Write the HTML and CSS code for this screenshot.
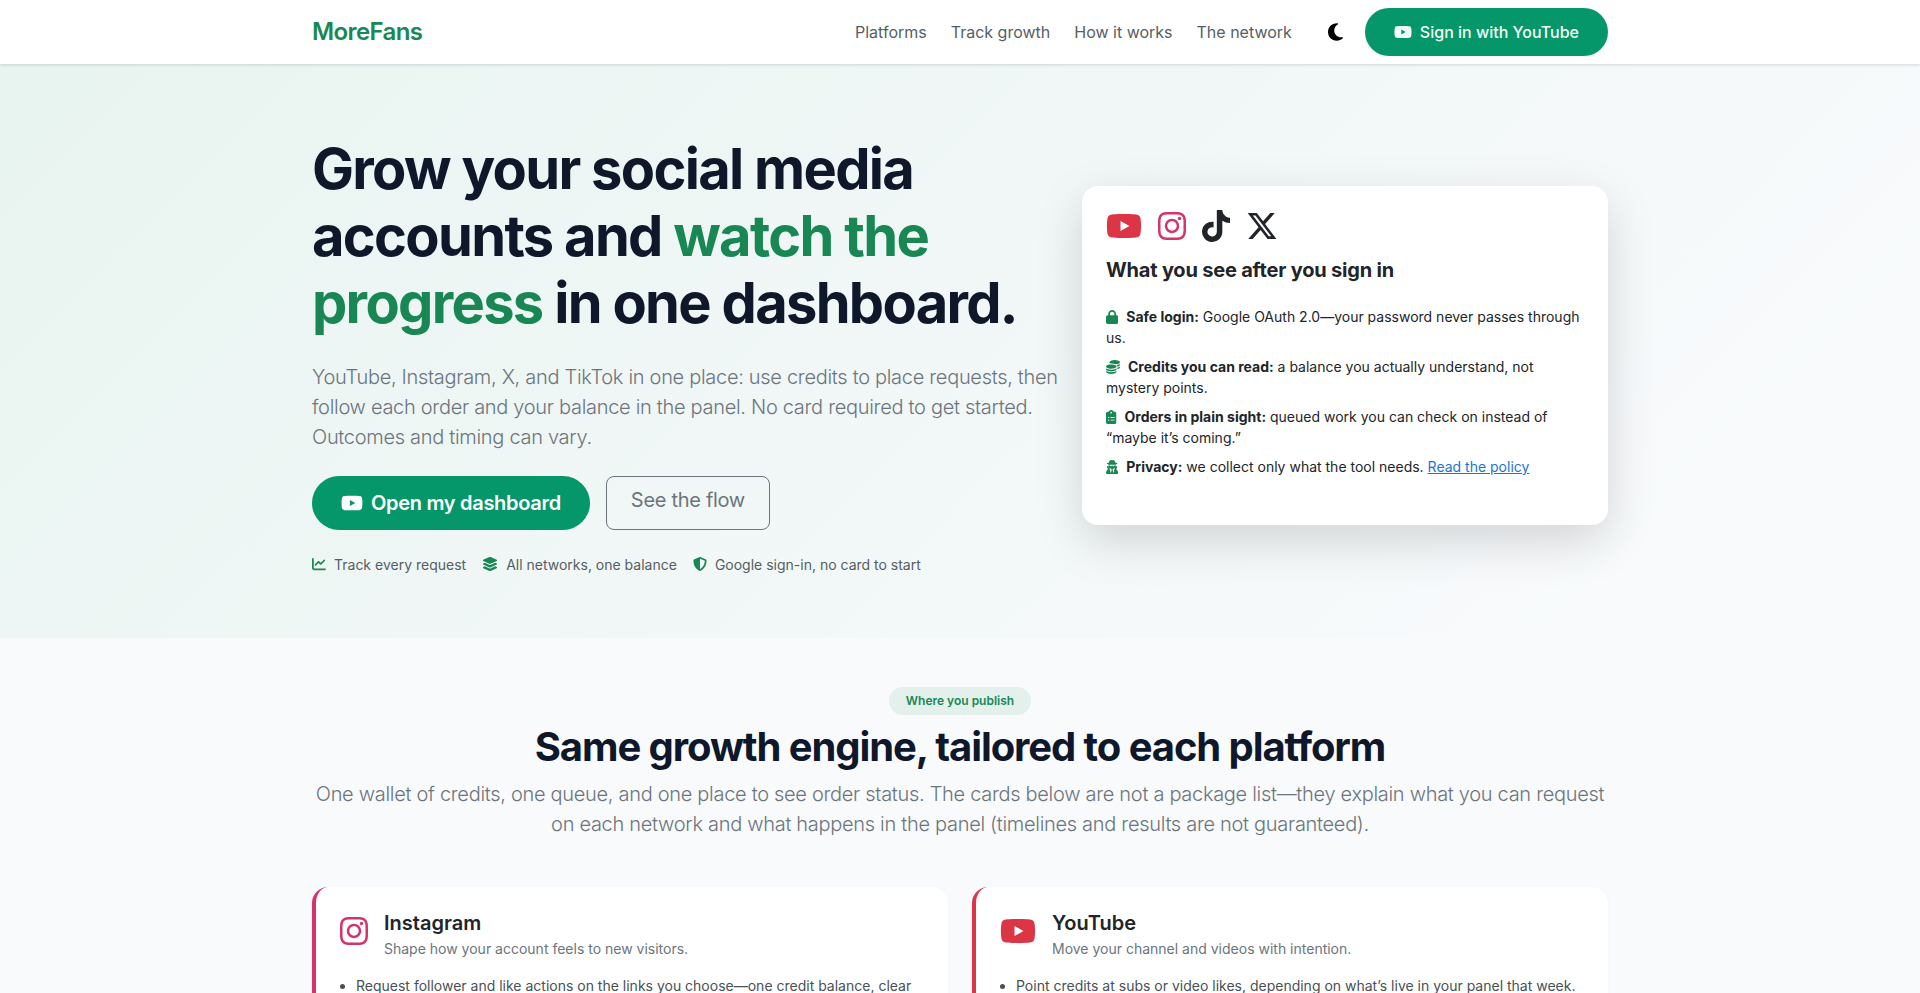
FILE: index.html
```html
<!DOCTYPE html>
<html lang="en">
<head>
    <meta charset="UTF-8">
    <meta name="viewport" content="width=device-width, initial-scale=1.0">
    <title>MoreFans</title>
    <link rel="stylesheet" href="styles.css">
</head>
<body>
    <svg class="sprite" xmlns="http://www.w3.org/2000/svg">
        <symbol id="i-youtube" viewBox="0 0 576 512"><path d="M549.655 124.083c-6.281-23.65-24.787-42.276-48.284-48.597C458.781 64 288 64 288 64S117.22 64 74.629 75.486c-23.497 6.322-42.003 24.947-48.284 48.597-11.412 42.867-11.412 132.305-11.412 132.305s0 89.438 11.412 132.305c6.281 23.65 24.787 41.5 48.284 47.821C117.22 448 288 448 288 448s170.78 0 213.371-11.486c23.497-6.321 42.003-24.171 48.284-47.821 11.412-42.867 11.412-132.305 11.412-132.305s0-89.438-11.412-132.305zm-317.51 213.508V175.185l142.739 81.205-142.739 81.201z"/></symbol>
        <symbol id="i-instagram" viewBox="0 0 448 512"><path d="M224.1 141c-63.6 0-114.9 51.3-114.9 114.9s51.3 114.9 114.9 114.9S339 319.5 339 255.9 287.7 141 224.1 141zm0 189.6c-41.1 0-74.7-33.5-74.7-74.7s33.5-74.7 74.7-74.7 74.7 33.5 74.7 74.7-33.6 74.7-74.7 74.7zm146.4-194.3c0 14.9-12 26.8-26.8 26.8-14.9 0-26.8-12-26.8-26.8s12-26.8 26.8-26.8 26.8 12 26.8 26.8zm76.1 27.2c-1.7-35.9-9.9-67.7-36.2-93.9-26.2-26.2-58-34.4-93.9-36.2-37-2.1-147.9-2.1-184.9 0-35.8 1.7-67.6 9.9-93.9 36.1s-34.4 58-36.2 93.9c-2.1 37-2.1 147.9 0 184.9 1.7 35.9 9.9 67.7 36.2 93.9s58 34.4 93.9 36.2c37 2.1 147.9 2.1 184.9 0 35.9-1.7 67.7-9.9 93.9-36.2 26.2-26.2 34.4-58 36.2-93.9 2.1-37 2.1-147.8 0-184.8zM398.8 388c-7.8 19.6-22.9 34.7-42.6 42.6-29.5 11.7-99.5 9-132.1 9s-102.7 2.6-132.1-9c-19.6-7.8-34.7-22.9-42.6-42.6-11.7-29.5-9-99.5-9-132.1s-2.6-102.7 9-132.1c7.8-19.6 22.9-34.7 42.6-42.6 29.5-11.7 99.5-9 132.1-9s102.7-2.6 132.1 9c19.6 7.8 34.7 22.9 42.6 42.6 11.7 29.5 9 99.5 9 132.1s2.7 102.7-9 132.1z"/></symbol>
        <symbol id="i-tiktok" viewBox="0 0 448 512"><path d="M448,209.91a210.06,210.06,0,0,1-122.77-39.25V349.38A162.55,162.55,0,1,1,185,188.31V278.2a74.62,74.62,0,1,0,52.23,71.18V0l88,0a121.18,121.18,0,0,0,1.86,22.17h0A122.18,122.18,0,0,0,381,102.39a121.43,121.43,0,0,0,67,20.14Z"/></symbol>
        <symbol id="i-x" viewBox="0 0 512 512"><path d="M389.2 48h70.6L305.6 224.2 487 464H345L233.7 318.6 106.5 464H35.8L200.7 275.5 26.8 48H172.4L272.9 180.9 389.2 48zM364.4 421.8h39.1L151.1 88h-42L364.4 421.8z"/></symbol>
        <symbol id="i-moon" viewBox="0 0 384 512"><path d="M223.5 32C100 32 0 132.3 0 256S100 480 223.5 480c60.6 0 115.5-24.2 155.8-63.4c5-4.9 6.3-12.5 3.1-18.7s-10.1-9.7-17-8.5c-9.8 1.7-19.8 2.6-30.1 2.6c-96.9 0-175.5-78.8-175.5-176c0-65.8 36-123.1 89.3-153.3c6.1-3.5 9.2-10.5 7.7-17.3s-7.3-11.9-14.3-12.5c-6.3-.5-12.6-.8-19-.8z"/></symbol>
        <symbol id="i-lock" viewBox="0 0 448 512"><path d="M144 144v48H304V144c0-44.2-35.8-80-80-80s-80 35.8-80 80zM80 192V144C80 64.5 144.5 0 224 0s144 64.5 144 144v48h16c35.3 0 64 28.7 64 64V448c0 35.3-28.7 64-64 64H64c-35.3 0-64-28.7-64-64V256c0-35.3 28.7-64 64-64H80z"/></symbol>
        <symbol id="i-coins" viewBox="0 0 512 512"><path d="M512 80c0 18-14.3 34.6-38.4 48c-29.1 16.1-72.5 27.5-122.3 30.9c-3.7-1.8-7.4-3.5-11.3-5C300.6 137.4 248.2 128 192 128c-8.3 0-16.4 .2-24.5 .6l-1.1-.6C142.3 114.6 128 98 128 80c0-44.2 86-80 192-80S512 35.8 512 80zM160.7 161.1c10.2-.7 20.7-1.1 31.3-1.1c62.2 0 117.4 12.3 152.5 31.4C369.3 204.9 384 221.7 384 240c0 4-.7 7.9-2.1 11.7c-4.6 13.2-17 25.3-35 35.5c0 0 0 0 0 0c-.1 .1-.3 .1-.4 .2l0 0 0 0c-.3 .2-.6 .3-.9 .5c-35 19.4-90.8 32-153.6 32c-59.6 0-112.9-11.3-148.2-29.1c-1.9-.9-3.7-1.9-5.5-2.9C14.3 274.6 0 258 0 240c0-34.8 53.4-64.5 128-75.4c10.5-1.5 21.4-2.7 32.7-3.5zM416 240c0-21.9-10.6-39.9-24.1-53.4c28.3-4.4 54.2-11.4 76.2-20.5c16.3-6.8 31.5-15.2 43.9-25.5V176c0 19.3-16.5 37.1-43.8 50.9c-14.6 7.4-32.4 13.7-52.4 18.5c.1-1.8 .2-3.5 .2-5.3zm-32 96c0 18-14.3 34.6-38.4 48c-1.8 1-3.6 1.9-5.5 2.9C304.9 404.7 251.6 416 192 416c-62.8 0-118.6-12.6-153.6-32C14.3 370.6 0 354 0 336V300.6c12.5 10.3 27.6 18.7 43.9 25.5C83.4 342.6 135.8 352 192 352s108.6-9.4 148.1-25.9c7.8-3.2 15.3-6.9 22.4-10.9c6.1-3.4 11.8-7.2 17.2-11.2c1.5-1.1 2.9-2.3 4.3-3.4V304v5.7V336zm32 0V304 278.1c19-4.2 36.5-9.5 52.1-16c16.3-6.8 31.5-15.2 43.9-25.5V272c0 10.5-5 21-14.9 30.9c-16.3 16.3-45 29.7-81.3 38.4c.1-1.7 .2-3.5 .2-5.3zM192 448c56.2 0 108.6-9.4 148.1-25.9c16.3-6.8 31.5-15.2 43.9-25.5V432c0 44.2-86 80-192 80S0 476.2 0 432V396.6c12.5 10.3 27.6 18.7 43.9 25.5C83.4 438.6 135.8 448 192 448z"/></symbol>
        <symbol id="i-clipboard" viewBox="0 0 384 512"><path d="M192 0c-41.8 0-77.4 26.7-90.5 64H64C28.7 64 0 92.7 0 128V448c0 35.3 28.7 64 64 64H320c35.3 0 64-28.7 64-64V128c0-35.3-28.7-64-64-64H282.5C269.4 26.7 233.8 0 192 0zm0 64a32 32 0 1 1 0 64 32 32 0 1 1 0-64zM72 272a24 24 0 1 1 48 0 24 24 0 1 1 -48 0zm104-16H304c8.8 0 16 7.2 16 16s-7.2 16-16 16H176c-8.8 0-16-7.2-16-16s7.2-16 16-16zM72 368a24 24 0 1 1 48 0 24 24 0 1 1 -48 0zm88 0c0-8.8 7.2-16 16-16H304c8.8 0 16 7.2 16 16s-7.2 16-16 16H176c-8.8 0-16-7.2-16-16z"/></symbol>
        <symbol id="i-secret" viewBox="0 0 448 512"><path d="M224 16c-6.7 0-10.8-2.8-15.5-6.1C201.9 5.4 194 0 176 0c-30.5 0-52 43.7-66 89.4C62.7 98.1 32 112.2 32 128c0 14.3 25 27.1 64.6 35.9c-.4 4-.6 8-.6 12.1c0 17 3.3 33.2 9.3 48H45.4C38 224 32 230 32 237.4c0 1.7 .3 3.4 1 5l38.8 96.9C28.2 371.8 0 423.8 0 482.3C0 498.7 13.3 512 29.7 512H418.3c16.4 0 29.7-13.3 29.7-29.7c0-58.5-28.2-110.4-71.7-143L415 242.4c.6-1.6 1-3.3 1-5c0-7.4-6-13.4-13.4-13.4H342.7c6-14.8 9.3-31 9.3-48c0-4.1-.2-8.1-.6-12.1C391 155.1 416 142.3 416 128c0-15.8-30.7-29.9-78-38.6C324 43.7 302.5 0 272 0c-18 0-25.9 5.4-32.5 9.9c-4.8 3.3-8.8 6.1-15.5 6.1zm56 208H267.6c-16.5 0-31.1-10.6-36.3-26.2c-2.3-7-12.2-7-14.5 0c-5.2 15.6-19.9 26.2-36.3 26.2H168c-22.1 0-40-17.9-40-40V169.6c28.2 4.1 61 6.4 96 6.4s67.8-2.3 96-6.4V184c0 22.1-17.9 40-40 40zm-88 96l16 32L176 480 128 288l64 32zm128-32L272 480 240 352l16-32 64-32z"/></symbol>
        <symbol id="i-chart" viewBox="0 0 512 512"><path d="M64 64c0-17.7-14.3-32-32-32S0 46.3 0 64V400c0 44.2 35.8 80 80 80H480c17.7 0 32-14.3 32-32s-14.3-32-32-32H80c-8.8 0-16-7.2-16-16V64zm406.6 86.6c12.5-12.5 12.5-32.8 0-45.3s-32.8-12.5-45.3 0L320 210.7l-57.4-57.4c-12.5-12.5-32.8-12.5-45.3 0l-112 112c-12.5 12.5-12.5 32.8 0 45.3s32.8 12.5 45.3 0L240 221.3l57.4 57.4c12.5 12.5 32.8 12.5 45.3 0l128-128z"/></symbol>
        <symbol id="i-layers" viewBox="0 0 576 512"><path d="M264.5 5.2c14.9-6.9 32.1-6.9 47 0l218.6 101c8.5 3.9 13.9 12.4 13.9 21.8s-5.4 17.9-13.9 21.8l-218.6 101c-14.9 6.9-32.1 6.9-47 0L45.9 149.8C37.4 145.8 32 137.3 32 128s5.4-17.9 13.9-21.8L264.5 5.2zM476.9 209.6l53.2 24.6c8.5 3.9 13.9 12.4 13.9 21.8s-5.4 17.9-13.9 21.8l-218.6 101c-14.9 6.9-32.1 6.9-47 0L45.9 277.8C37.4 273.8 32 265.3 32 256s5.4-17.9 13.9-21.8l53.2-24.6 152 70.2c23.4 10.8 50.4 10.8 73.8 0l152-70.2zm-152 198.2l152-70.2 53.2 24.6c8.5 3.9 13.9 12.4 13.9 21.8s-5.4 17.9-13.9 21.8l-218.6 101c-14.9 6.9-32.1 6.9-47 0L45.9 405.8C37.4 401.8 32 393.3 32 384s5.4-17.9 13.9-21.8l53.2-24.6 152 70.2c23.4 10.8 50.4 10.8 73.8 0z"/></symbol>
        <symbol id="i-shield" viewBox="0 0 512 512"><path d="M256 0c4.6 0 9.2 1 13.4 2.9L457.7 82.8c22 9.3 38.4 31 38.3 57.2c-.5 99.2-41.3 280.7-213.6 363.2c-16.7 8-36.1 8-52.8 0C57.3 420.7 16.5 239.2 16 140c-.1-26.2 16.3-47.9 38.3-57.2L242.7 2.9C246.8 1 251.4 0 256 0zm0 66.8V444.8C394 378 431.1 230.1 432 141.4L256 66.8l0 0z"/></symbol>
    </svg>

    <header class="navbar">
        <div class="container navbar-inner">
            <a class="brand" href="#">MoreFans</a>
            <nav class="nav-links">
                <a href="#">Platforms</a>
                <a href="#">Track growth</a>
                <a href="#">How it works</a>
                <a href="#">The network</a>
            </nav>
            <svg class="moon"><use href="#i-moon"/></svg>
            <a class="btn-signin" href="#"><svg class="yt-small"><use href="#i-youtube"/></svg>Sign in with YouTube</a>
        </div>
    </header>

    <section class="hero">
        <div class="container hero-inner">
            <div class="hero-copy">
                <h1>Grow your social media accounts and <span class="accent">watch the progress</span> in one dashboard.</h1>
                <p class="lead">YouTube, Instagram, X, and TikTok in one place: use credits to place requests, then follow each order and your balance in the panel. No card required to get started. Outcomes and timing can vary.</p>
                <div class="hero-actions">
                    <a class="btn-primary" href="#"><svg class="yt-medium"><use href="#i-youtube"/></svg>Open my dashboard</a>
                    <a class="btn-outline" href="#">See the flow</a>
                </div>
                <div class="hero-checks">
                    <span><svg class="check-chart"><use href="#i-chart"/></svg>Track every request</span>
                    <span><svg class="check-layers"><use href="#i-layers"/></svg>All networks, one balance</span>
                    <span><svg class="check-shield"><use href="#i-shield"/></svg>Google sign-in, no card to start</span>
                </div>
            </div>
            <aside class="hero-card">
                <div class="hero-card-icons">
                    <svg class="ic-youtube"><use href="#i-youtube"/></svg>
                    <svg class="ic-instagram"><use href="#i-instagram"/></svg>
                    <svg class="ic-tiktok"><use href="#i-tiktok"/></svg>
                    <svg class="ic-x"><use href="#i-x"/></svg>
                </div>
                <h2>What you see after you sign in</h2>
                <ul class="hero-card-list">
                    <li><svg class="li-lock"><use href="#i-lock"/></svg><strong>Safe login:</strong> Google OAuth 2.0—your password never passes through us.</li>
                    <li><svg class="li-coins"><use href="#i-coins"/></svg><strong>Credits you can read:</strong> a balance you actually understand, not mystery points.</li>
                    <li><svg class="li-clipboard"><use href="#i-clipboard"/></svg><strong>Orders in plain sight:</strong> queued work you can check on instead of “maybe it’s coming.”</li>
                    <li><svg class="li-secret"><use href="#i-secret"/></svg><strong>Privacy:</strong> we collect only what the tool needs. <a href="#">Read the policy</a></li>
                </ul>
            </aside>
        </div>
    </section>

    <section class="platforms">
        <div class="container">
            <div class="section-head">
                <span class="pill">Where you publish</span>
                <h2>Same growth engine, tailored to each platform</h2>
                <p>One wallet of credits, one queue, and one place to see order status. The cards below are not a package list—they explain what you can request on each network and what happens in the panel (timelines and results are not guaranteed).</p>
            </div>
            <div class="platform-grid">
                <article class="platform-card card-instagram">
                    <div class="platform-head">
                        <svg class="ph-instagram"><use href="#i-instagram"/></svg>
                        <div>
                            <h3>Instagram</h3>
                            <p>Shape how your account feels to new visitors.</p>
                        </div>
                    </div>
                    <ul>
                        <li>Request follower and like actions on the links you choose—one credit balance, clear order status.</li>
                    </ul>
                </article>
                <article class="platform-card card-youtube">
                    <div class="platform-head">
                        <svg class="ph-youtube"><use href="#i-youtube"/></svg>
                        <div>
                            <h3>YouTube</h3>
                            <p>Move your channel and videos with intention.</p>
                        </div>
                    </div>
                    <ul>
                        <li>Point credits at subs or video likes, depending on what’s live in your panel that week.</li>
                    </ul>
                </article>
            </div>
        </div>
    </section>
</body>
</html>
```

FILE: styles.css
```css
* {
    box-sizing: border-box;
}
body {
    margin: 0;
    font-family: Inter, "Liberation Sans", sans-serif;
    font-size: 16px;
    line-height: 1.5;
    color: #212529;
    background-color: #f8fafc;
}
a {
    text-decoration: none;
}
svg {
    fill: currentColor;
    flex-shrink: 0;
}
.sprite {
    display: none;
}
.container {
    width: 1320px;
    margin: 0 auto;
    padding: 0 12px;
}

/* navbar */
.navbar {
    position: relative;
    background-color: #fff;
    box-shadow: 0 1px 3px rgba(15, 23, 42, 0.15);
}
.navbar-inner {
    display: flex;
    align-items: center;
    height: 64px;
}
.brand {
    font-size: 24px;
    font-weight: 600;
    letter-spacing: -0.025em;
    color: #198754;
    margin-right: auto;
}
.nav-links {
    display: flex;
    gap: 24px;
    margin-right: 36px;
}
.nav-links a {
    color: #565e64;
}
.moon {
    width: 15px;
    height: 20px;
    color: #000;
    margin-right: 22px;
}
.btn-signin {
    display: flex;
    align-items: center;
    gap: 8px;
    height: 48px;
    padding: 0 29px;
    border-radius: 24px;
    background-color: #059669;
    color: #f0fdf8;
    font-weight: 500;
}
.yt-small {
    width: 18px;
    height: 16px;
}

/* hero */
.hero {
    background: linear-gradient(135deg, #e8f4f0 0%, #f8fafc 85%);
    height: 574px;
    padding-top: 72px;
}
.hero-inner {
    display: flex;
    align-items: center;
    justify-content: space-between;
}
.hero-copy {
    width: 746px;
}
.hero h1 {
    margin: 0 0 24px;
    font-size: 56px;
    font-weight: 700;
    line-height: 1.2;
    letter-spacing: -0.03em;
    color: #0f172a;
}
.accent {
    color: #198754;
}
.lead {
    margin: 0 0 24px;
    font-size: 20px;
    font-weight: 300;
    letter-spacing: -0.015em;
    color: #6c757d;
}
.hero-actions {
    display: flex;
    align-items: flex-start;
    gap: 16px;
    margin-bottom: 24px;
}
.btn-primary {
    display: flex;
    align-items: center;
    gap: 8px;
    height: 54px;
    padding: 0 29px;
    border-radius: 27px;
    background-color: #059669;
    color: #fff;
    font-size: 20px;
    font-weight: 600;
    letter-spacing: -0.015em;
}
.yt-medium {
    width: 22px;
    height: 20px;
}
.btn-outline {
    display: block;
    height: 54px;
    padding: 8px 24px;
    border: 1px solid #6c757d;
    border-radius: 8px;
    color: #6c757d;
    font-size: 20px;
    letter-spacing: -0.015em;
}
.hero-checks {
    display: flex;
    gap: 16px;
    font-size: 14px;
    color: #565e64;
}
.hero-checks span {
    display: flex;
    align-items: center;
    gap: 8px;
}
.hero-checks svg {
    color: #198754;
    width: 14px;
    height: 14px;
}
.hero-checks .check-layers {
    width: 16px;
    height: 16px;
}
.hero-card {
    width: 526px;
    padding: 24px;
    min-height: 339px;
    background-color: #fff;
    border-radius: 16px;
    box-shadow: 0 16px 48px rgba(0, 0, 0, 0.15);
}
.hero-card-icons {
    display: flex;
    align-items: center;
    gap: 16px;
    margin-bottom: 16px;
}
.ic-youtube {
    width: 36px;
    height: 32px;
    color: #dc3545;
}
.ic-instagram {
    width: 28px;
    height: 32px;
    color: #d6336c;
}
.ic-tiktok {
    width: 28px;
    height: 32px;
    color: #212529;
}
.ic-x {
    width: 32px;
    height: 32px;
    color: #212529;
}
.hero-card h2 {
    margin: 0 0 24px;
    font-size: 20px;
    font-weight: 700;
    line-height: 1.2;
    letter-spacing: -0.01em;
}
.hero-card-list {
    list-style: none;
    margin: 0;
    padding: 0;
    font-size: 14px;
}
.hero-card-list li {
    margin-bottom: 8px;
}
.hero-card-list svg {
    height: 14px;
    margin-right: 8px;
    color: #198754;
    vertical-align: -2px;
}
.li-lock,
.li-secret {
    width: 12.25px;
}
.li-coins {
    width: 14px;
}
.li-clipboard {
    width: 10.5px;
}
.hero-card-list a {
    color: #1c74d9;
    text-decoration: underline;
}

/* platforms */
.platforms {
    padding-top: 49px;
}
.section-head {
    text-align: center;
    margin-bottom: 48px;
}
.pill {
    display: inline-block;
    padding: 5px 17px;
    border-radius: 14px;
    background-color: #e4f0eb;
    color: #198754;
    font-size: 12px;
    font-weight: 600;
}
.section-head h2 {
    margin: 8px 0;
    font-size: 40px;
    font-weight: 700;
    line-height: 1.2;
    letter-spacing: -0.027em;
    color: #0f172a;
}
.section-head p {
    margin: 0;
    font-size: 20px;
    font-weight: 300;
    letter-spacing: -0.015em;
    color: #6c757d;
}
.platform-grid {
    display: grid;
    grid-template-columns: 1fr 1fr;
    gap: 24px;
}
.platform-card {
    padding: 24px;
    background-color: #fff;
    border-left: 4px solid;
    border-radius: 16px;
    box-shadow: 0 1px 3px rgba(15, 23, 42, 0.04);
}
.card-instagram {
    border-left-color: #d6336c;
}
.card-youtube {
    border-left-color: #dc3545;
}
.platform-head {
    display: flex;
    align-items: flex-start;
    gap: 16px;
    margin-bottom: 16px;
}
.ph-instagram {
    width: 28px;
    height: 32px;
    margin-top: 4px;
    color: #d6336c;
}
.ph-youtube {
    width: 36px;
    height: 32px;
    margin-top: 4px;
    color: #dc3545;
}
.platform-head h3 {
    margin: 0 0 3px;
    font-size: 20px;
    font-weight: 600;
    line-height: 1.2;
}
.platform-head p {
    margin: 0;
    font-size: 14px;
    color: #6c757d;
}
.platform-card ul {
    margin: 0;
    padding-left: 16px;
    font-size: 14px;
    color: #495057;
}
```
